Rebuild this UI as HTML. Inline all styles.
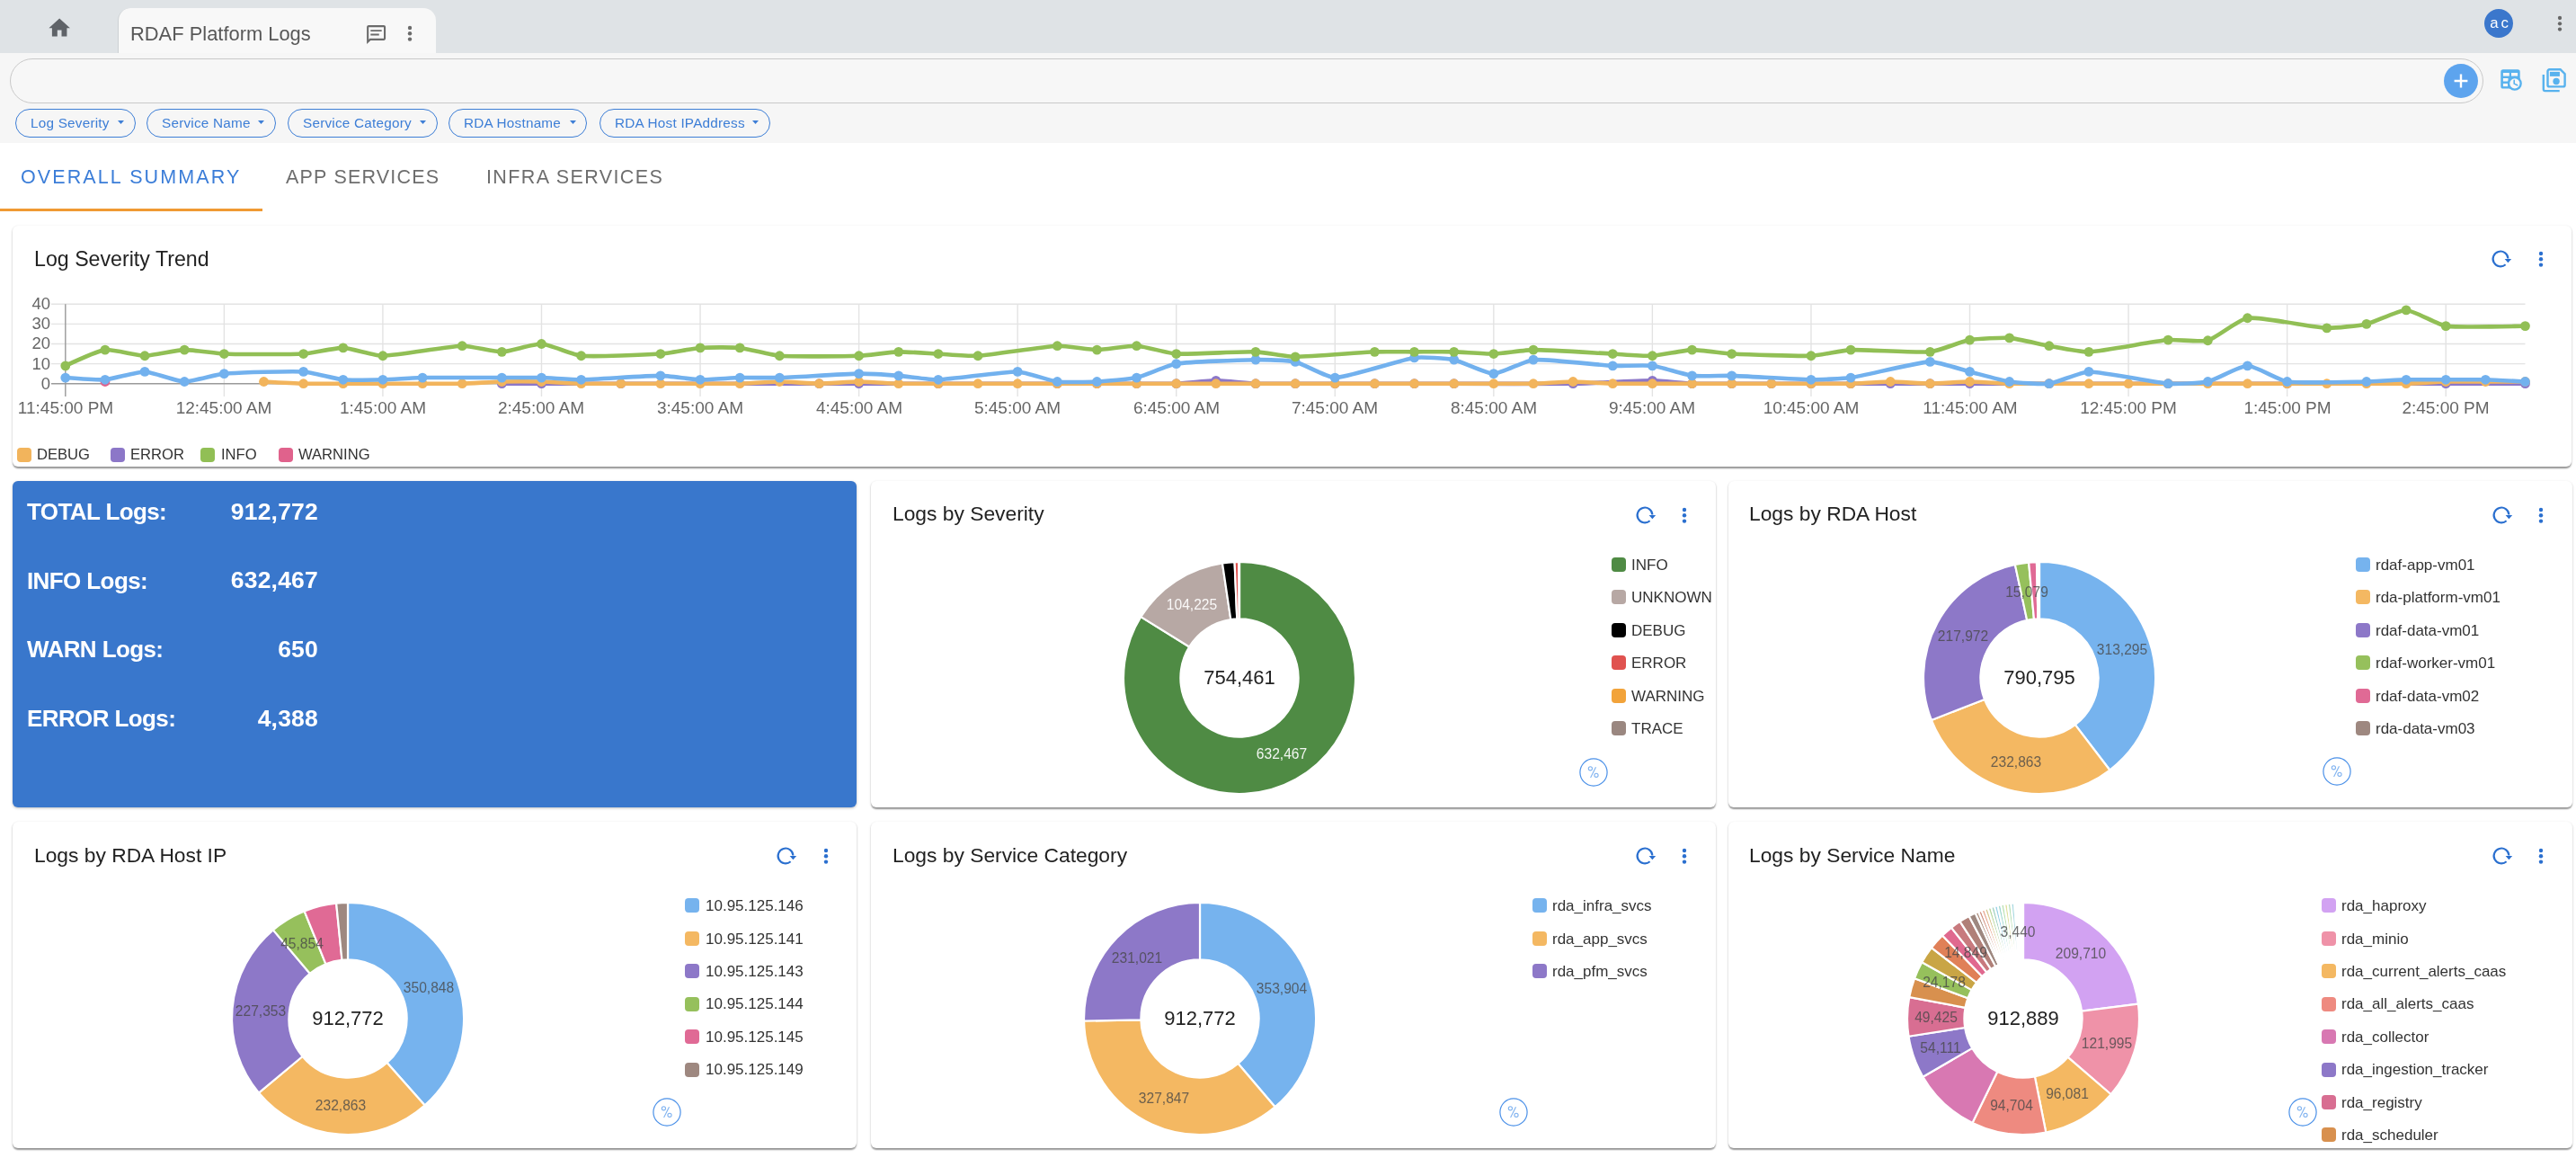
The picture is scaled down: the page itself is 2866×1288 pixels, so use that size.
<!DOCTYPE html><html><head><meta charset="utf-8"><style>
html,body{margin:0;padding:0;width:2866px;height:1288px;overflow:hidden;background:#fff;position:relative;font-family:"Liberation Sans", sans-serif;}
.t{position:absolute;white-space:nowrap;line-height:1;will-change:transform;}
.card{position:absolute;background:#fff;border-radius:6px;box-shadow:0 1px 3px rgba(0,0,0,0.14),0 1.5px 1.5px rgba(0,0,0,0.22),0 2.5px 2px -1px rgba(0,0,0,0.18);}
</style></head><body>

<div style="position:absolute;left:0.00px;top:0.00px;width:2866.00px;height:59.00px;background:#DFE3E6"></div>
<div style="position:absolute;left:131.20px;top:9.00px;width:354.00px;height:50.00px;box-sizing:border-box;background:#F8F8F8;border-left:1.2px solid #CDD1D4;border-radius:14px 14px 0 0"></div>
<svg style="position:absolute;left:51.64px;top:16.66px;" width="28.32" height="28.32" viewBox="0 0 24 24"><path fill="#5F6368" d="M10 20v-6h4v6h5v-8h3L12 3 2 12h3v8z"/></svg>
<div class="t" style="left:144.70px;top:27.26px;font-size:21.9px;color:#585858;font-weight:400;letter-spacing:0px;">RDAF Platform Logs</div>
<svg style="position:absolute;left:405.90px;top:25.90px;" width="25.20" height="25.20" viewBox="0 0 24 24"><path fill="#6B6B6B" d="M20 2H4c-1.1 0-1.99.9-1.99 2L2 22l4-4h14c1.1 0 2-.9 2-2V4c0-1.1-.9-2-2-2zm0 14H5.17L4 17.17V4h16v12zM6 6.9h11.8v1.75H6zM6 11h9v1.75H6z"/></svg>
<svg style="position:absolute;left:450.30px;top:25.20px;" width="12.00" height="24.60" viewBox="0 0 12 24.6"><circle cx="6" cy="6.0" r="2.2" fill="#6B6B6B"/><circle cx="6" cy="12.3" r="2.2" fill="#6B6B6B"/><circle cx="6" cy="18.6" r="2.2" fill="#6B6B6B"/></svg>
<svg style="position:absolute;left:2764.00px;top:10.00px;" width="32.00" height="32.00" viewBox="0 0 32 32"><circle cx="16" cy="16" r="16" fill="#3B77CC"/></svg>
<div class="t" style="left:2032.00px;width:1500px;text-align:center;top:17.98px;font-size:16.8px;color:#fff;font-weight:400;letter-spacing:3.0px;">ac</div>
<svg style="position:absolute;left:2841.80px;top:14.20px;" width="12.00" height="24.60" viewBox="0 0 12 24.6"><circle cx="6" cy="6.0" r="2.15" fill="#666"/><circle cx="6" cy="12.3" r="2.15" fill="#666"/><circle cx="6" cy="18.6" r="2.15" fill="#666"/></svg>
<div style="position:absolute;left:0.00px;top:59.00px;width:2866.00px;height:100.00px;background:#F6F6F6"></div>
<div style="position:absolute;left:11.00px;top:65.00px;width:2752.00px;height:49.60px;box-sizing:border-box;border:1px solid #C9C9C9;border-radius:25px;background:#F7F7F7"></div>
<svg style="position:absolute;left:2719.00px;top:71.00px;" width="38.00" height="38.00" viewBox="0 0 38 38"><circle cx="19" cy="19" r="19" fill="#5DA4EE"/><path d="M11.6 19h14.8M19 11.6v14.8" stroke="#fff" stroke-width="2.4"/></svg>
<svg style="position:absolute;left:2780.00px;top:75.00px;" width="28.00" height="28.00" viewBox="0 0 28 28"><rect x="2.3" y="2.3" width="21.4" height="21.2" rx="2.6" fill="#58B2EE"/>
<g fill="#F7F7F7"><rect x="4.9" y="6.0" width="6.9" height="3.6"/><rect x="14.0" y="6.0" width="7.1" height="3.6"/>
<rect x="4.9" y="12.0" width="5.6" height="3.5"/><rect x="4.9" y="17.9" width="5.2" height="3.2"/></g>
<circle cx="17.85" cy="17.85" r="8" fill="#58B2EE"/><circle cx="17.85" cy="17.85" r="5.6" fill="#F7F7F7"/>
<path d="M17.2 14.4v3.7l3.5 1.7" fill="none" stroke="#58B2EE" stroke-width="1.6" stroke-linecap="round"/></svg>
<svg style="position:absolute;left:2826.00px;top:74.00px;" width="32.00" height="30.00" viewBox="0 0 32 30"><g fill="none" stroke="#58B2EE" stroke-width="2.4">
<path d="M3.8 9.1V25.3a1.8 1.8 0 0 0 1.8 1.8H21.7"/>
<path d="M10.5 3.2H22.6L27.6 8.2V20.4a2 2 0 0 1-2 2H10.5a2 2 0 0 1-2-2V5.2a2 2 0 0 1 2-2z"/></g>
<rect x="10.9" y="5.9" width="11" height="5" fill="#58B2EE"/><circle cx="18.05" cy="16.5" r="3.7" fill="#58B2EE"/></svg>
<div style="position:absolute;left:17.10px;top:120.80px;width:133.50px;height:32.00px;box-sizing:border-box;border:1.6px solid #3D7ED6;border-radius:16px"></div>
<div class="t" style="left:34.20px;top:128.95px;font-size:15.3px;color:#3D7ED6;font-weight:400;letter-spacing:0.22px;">Log Severity</div>
<svg style="position:absolute;left:131.10px;top:133.80px;" width="7.00" height="4.00" viewBox="0 0 7 4"><path d="M0 0h7L3.5 4z" fill="#3D7ED6"/></svg>
<div style="position:absolute;left:163.30px;top:120.80px;width:143.30px;height:32.00px;box-sizing:border-box;border:1.6px solid #3D7ED6;border-radius:16px"></div>
<div class="t" style="left:180.40px;top:128.95px;font-size:15.3px;color:#3D7ED6;font-weight:400;letter-spacing:0.22px;">Service Name</div>
<svg style="position:absolute;left:287.10px;top:133.80px;" width="7.00" height="4.00" viewBox="0 0 7 4"><path d="M0 0h7L3.5 4z" fill="#3D7ED6"/></svg>
<div style="position:absolute;left:320.20px;top:120.80px;width:166.50px;height:32.00px;box-sizing:border-box;border:1.6px solid #3D7ED6;border-radius:16px"></div>
<div class="t" style="left:337.30px;top:128.95px;font-size:15.3px;color:#3D7ED6;font-weight:400;letter-spacing:0.22px;">Service Category</div>
<svg style="position:absolute;left:467.20px;top:133.80px;" width="7.00" height="4.00" viewBox="0 0 7 4"><path d="M0 0h7L3.5 4z" fill="#3D7ED6"/></svg>
<div style="position:absolute;left:499.30px;top:120.80px;width:154.10px;height:32.00px;box-sizing:border-box;border:1.6px solid #3D7ED6;border-radius:16px"></div>
<div class="t" style="left:516.40px;top:128.95px;font-size:15.3px;color:#3D7ED6;font-weight:400;letter-spacing:0.22px;">RDA Hostname</div>
<svg style="position:absolute;left:633.90px;top:133.80px;" width="7.00" height="4.00" viewBox="0 0 7 4"><path d="M0 0h7L3.5 4z" fill="#3D7ED6"/></svg>
<div style="position:absolute;left:667.00px;top:120.80px;width:189.70px;height:32.00px;box-sizing:border-box;border:1.6px solid #3D7ED6;border-radius:16px"></div>
<div class="t" style="left:684.10px;top:128.95px;font-size:15.3px;color:#3D7ED6;font-weight:400;letter-spacing:0.22px;">RDA Host IPAddress</div>
<svg style="position:absolute;left:837.20px;top:133.80px;" width="7.00" height="4.00" viewBox="0 0 7 4"><path d="M0 0h7L3.5 4z" fill="#3D7ED6"/></svg>
<div class="t" style="left:23.40px;top:186.90px;font-size:21.5px;color:#3B7DD8;font-weight:400;letter-spacing:2.1px;">OVERALL SUMMARY</div>
<div class="t" style="left:318.00px;top:186.90px;font-size:21.5px;color:#6E6E6E;font-weight:400;letter-spacing:1.2px;">APP SERVICES</div>
<div class="t" style="left:540.90px;top:186.90px;font-size:21.5px;color:#6E6E6E;font-weight:400;letter-spacing:1.4px;">INFRA SERVICES</div>
<div style="position:absolute;left:0.00px;top:232.00px;width:292.00px;height:3.00px;background:#F09A33"></div>
<div class="card" style="left:13.5px;top:250.5px;width:2847.5px;height:268.5px"></div>
<div class="t" style="left:38.00px;top:276.76px;font-size:23.2px;color:#222;font-weight:400;letter-spacing:0px;">Log Severity Trend</div>
<svg style="position:absolute;left:2768.20px;top:274.40px;" width="28.00" height="28.00" viewBox="0 0 28 28"><path d="M19.62 20.24 A8.4 8.4 0 1 1 22.40 13.50" fill="none" stroke="#2A6FCF" stroke-width="2.1"/><path d="M18.60 13.90h7.6l-3.8 4.3z" fill="#2A6FCF"/></svg>
<svg style="position:absolute;left:2821.40px;top:276.20px;" width="12.00" height="24.60" viewBox="0 0 12 24.6"><circle cx="6" cy="6.0" r="2.2" fill="#2A6FCF"/><circle cx="6" cy="12.3" r="2.2" fill="#2A6FCF"/><circle cx="6" cy="18.6" r="2.2" fill="#2A6FCF"/></svg>
<svg style="position:absolute;left:0.00px;top:0.00px;pointer-events:none" width="2866.00" height="520.00" viewBox="0 0 2866 520"><line x1="57" y1="404.60" x2="2809.48" y2="404.60" stroke="#E3E3E3" stroke-width="1.4"/><line x1="57" y1="382.50" x2="2809.48" y2="382.50" stroke="#E3E3E3" stroke-width="1.4"/><line x1="57" y1="360.40" x2="2809.48" y2="360.40" stroke="#E3E3E3" stroke-width="1.4"/><line x1="57" y1="338.30" x2="2809.48" y2="338.30" stroke="#E3E3E3" stroke-width="1.4"/><line x1="72.80" y1="338.30" x2="72.80" y2="441" stroke="#9A9A9A" stroke-width="1.4"/><line x1="249.36" y1="338.30" x2="249.36" y2="441" stroke="#E3E3E3" stroke-width="1.4"/><line x1="425.92" y1="338.30" x2="425.92" y2="441" stroke="#E3E3E3" stroke-width="1.4"/><line x1="602.48" y1="338.30" x2="602.48" y2="441" stroke="#E3E3E3" stroke-width="1.4"/><line x1="779.04" y1="338.30" x2="779.04" y2="441" stroke="#E3E3E3" stroke-width="1.4"/><line x1="955.60" y1="338.30" x2="955.60" y2="441" stroke="#E3E3E3" stroke-width="1.4"/><line x1="1132.16" y1="338.30" x2="1132.16" y2="441" stroke="#E3E3E3" stroke-width="1.4"/><line x1="1308.72" y1="338.30" x2="1308.72" y2="441" stroke="#E3E3E3" stroke-width="1.4"/><line x1="1485.28" y1="338.30" x2="1485.28" y2="441" stroke="#E3E3E3" stroke-width="1.4"/><line x1="1661.84" y1="338.30" x2="1661.84" y2="441" stroke="#E3E3E3" stroke-width="1.4"/><line x1="1838.40" y1="338.30" x2="1838.40" y2="441" stroke="#E3E3E3" stroke-width="1.4"/><line x1="2014.96" y1="338.30" x2="2014.96" y2="441" stroke="#E3E3E3" stroke-width="1.4"/><line x1="2191.52" y1="338.30" x2="2191.52" y2="441" stroke="#E3E3E3" stroke-width="1.4"/><line x1="2368.08" y1="338.30" x2="2368.08" y2="441" stroke="#E3E3E3" stroke-width="1.4"/><line x1="2544.64" y1="338.30" x2="2544.64" y2="441" stroke="#E3E3E3" stroke-width="1.4"/><line x1="2721.20" y1="338.30" x2="2721.20" y2="441" stroke="#E3E3E3" stroke-width="1.4"/><line x1="57" y1="426.70" x2="2809.48" y2="426.70" stroke="#9A9A9A" stroke-width="1.4"/><path d="M558.34 426.70 C558.34 426.70 594.53 426.70 602.48 426.70 C618.37 426.70 674.87 426.70 690.76 426.70 C730.49 426.70 871.73 426.70 911.46 426.70 C919.41 426.70 947.65 426.70 955.60 426.70 C971.49 426.70 1027.99 426.70 1043.88 426.70 C1067.72 426.70 1152.46 426.70 1176.30 426.70 C1184.25 426.70 1212.49 426.70 1220.44 426.70 C1228.39 426.70 1256.63 426.70 1264.58 426.70 C1272.53 426.70 1300.79 427.00 1308.72 426.70 C1316.68 426.40 1344.91 423.38 1352.86 423.38 C1360.81 423.38 1389.04 426.40 1397.00 426.70 C1404.93 427.00 1433.19 426.70 1441.14 426.70 C1449.09 426.70 1477.33 426.70 1485.28 426.70 C1493.23 426.70 1521.47 426.70 1529.42 426.70 C1537.37 426.70 1565.61 426.70 1573.56 426.70 C1581.51 426.70 1609.75 426.70 1617.70 426.70 C1641.54 426.70 1726.29 427.06 1750.12 426.70 C1766.02 426.46 1822.52 423.38 1838.40 423.38 C1846.36 423.38 1874.58 426.40 1882.54 426.70 C1890.47 427.00 1918.73 426.70 1926.68 426.70 C1934.63 426.70 1962.87 426.70 1970.82 426.70 C1978.77 426.70 2007.01 426.70 2014.96 426.70 C2022.91 426.70 2051.15 426.70 2059.10 426.70 C2067.05 426.70 2095.29 426.70 2103.24 426.70 C2111.19 426.70 2139.43 426.70 2147.38 426.70 C2155.33 426.70 2183.57 426.70 2191.52 426.70 C2207.41 426.70 2263.91 426.70 2279.80 426.70 C2303.64 426.70 2388.38 426.70 2412.22 426.70 C2436.06 426.70 2520.80 426.70 2544.64 426.70 C2576.42 426.70 2689.42 426.70 2721.20 426.70 C2737.09 426.70 2809.48 426.70 2809.48 426.70" fill="none" stroke="#8C77C8" stroke-width="4.6" stroke-linejoin="round"/><circle cx="558.34" cy="426.70" r="5.4" fill="#8C77C8"/><circle cx="602.48" cy="426.70" r="5.4" fill="#8C77C8"/><circle cx="690.76" cy="426.70" r="5.4" fill="#8C77C8"/><circle cx="911.46" cy="426.70" r="5.4" fill="#8C77C8"/><circle cx="955.60" cy="426.70" r="5.4" fill="#8C77C8"/><circle cx="1043.88" cy="426.70" r="5.4" fill="#8C77C8"/><circle cx="1176.30" cy="426.70" r="5.4" fill="#8C77C8"/><circle cx="1220.44" cy="426.70" r="5.4" fill="#8C77C8"/><circle cx="1264.58" cy="426.70" r="5.4" fill="#8C77C8"/><circle cx="1308.72" cy="426.70" r="5.4" fill="#8C77C8"/><circle cx="1352.86" cy="423.38" r="5.4" fill="#8C77C8"/><circle cx="1397.00" cy="426.70" r="5.4" fill="#8C77C8"/><circle cx="1441.14" cy="426.70" r="5.4" fill="#8C77C8"/><circle cx="1485.28" cy="426.70" r="5.4" fill="#8C77C8"/><circle cx="1529.42" cy="426.70" r="5.4" fill="#8C77C8"/><circle cx="1573.56" cy="426.70" r="5.4" fill="#8C77C8"/><circle cx="1617.70" cy="426.70" r="5.4" fill="#8C77C8"/><circle cx="1750.12" cy="426.70" r="5.4" fill="#8C77C8"/><circle cx="1838.40" cy="423.38" r="5.4" fill="#8C77C8"/><circle cx="1882.54" cy="426.70" r="5.4" fill="#8C77C8"/><circle cx="1926.68" cy="426.70" r="5.4" fill="#8C77C8"/><circle cx="1970.82" cy="426.70" r="5.4" fill="#8C77C8"/><circle cx="2014.96" cy="426.70" r="5.4" fill="#8C77C8"/><circle cx="2059.10" cy="426.70" r="5.4" fill="#8C77C8"/><circle cx="2103.24" cy="426.70" r="5.4" fill="#8C77C8"/><circle cx="2147.38" cy="426.70" r="5.4" fill="#8C77C8"/><circle cx="2191.52" cy="426.70" r="5.4" fill="#8C77C8"/><circle cx="2279.80" cy="426.70" r="5.4" fill="#8C77C8"/><circle cx="2412.22" cy="426.70" r="5.4" fill="#8C77C8"/><circle cx="2544.64" cy="426.70" r="5.4" fill="#8C77C8"/><circle cx="2721.20" cy="426.70" r="5.4" fill="#8C77C8"/><circle cx="2809.48" cy="426.70" r="5.4" fill="#8C77C8"/><circle cx="116.94" cy="424.49" r="5.4" fill="#E0628C"/><path d="M293.50 424.49 C293.50 424.49 329.69 426.50 337.64 426.70 C345.58 426.90 373.83 426.70 381.78 426.70 C389.73 426.70 417.97 426.70 425.92 426.70 C433.87 426.70 462.11 426.70 470.06 426.70 C478.01 426.70 506.26 426.90 514.20 426.70 C522.15 426.50 550.39 424.69 558.34 424.49 C566.28 424.29 594.54 424.29 602.48 424.49 C610.43 424.69 638.67 426.50 646.62 426.70 C654.56 426.90 682.81 426.70 690.76 426.70 C698.71 426.70 726.95 426.70 734.90 426.70 C742.85 426.70 771.09 426.70 779.04 426.70 C786.99 426.70 815.24 426.90 823.18 426.70 C831.13 426.50 859.37 424.49 867.32 424.49 C875.27 424.49 903.51 426.70 911.46 426.70 C919.41 426.70 947.65 424.49 955.60 424.49 C963.55 424.49 991.79 426.50 999.74 426.70 C1007.68 426.90 1035.93 426.70 1043.88 426.70 C1051.83 426.70 1080.07 426.70 1088.02 426.70 C1095.97 426.70 1124.21 426.70 1132.16 426.70 C1140.11 426.70 1168.35 426.70 1176.30 426.70 C1184.25 426.70 1212.49 426.70 1220.44 426.70 C1228.39 426.70 1256.63 426.70 1264.58 426.70 C1272.53 426.70 1300.77 426.70 1308.72 426.70 C1316.67 426.70 1344.91 426.70 1352.86 426.70 C1360.81 426.70 1389.05 426.70 1397.00 426.70 C1404.95 426.70 1433.19 426.70 1441.14 426.70 C1449.09 426.70 1477.33 426.70 1485.28 426.70 C1493.23 426.70 1521.47 426.70 1529.42 426.70 C1537.37 426.70 1565.61 426.70 1573.56 426.70 C1581.51 426.70 1609.75 426.70 1617.70 426.70 C1625.65 426.70 1653.89 426.70 1661.84 426.70 C1669.79 426.70 1698.04 426.90 1705.98 426.70 C1713.93 426.50 1742.17 424.49 1750.12 424.49 C1758.07 424.49 1786.31 426.50 1794.26 426.70 C1802.20 426.90 1830.45 426.70 1838.40 426.70 C1846.35 426.70 1874.59 426.70 1882.54 426.70 C1890.49 426.70 1918.73 426.70 1926.68 426.70 C1934.63 426.70 1962.87 426.70 1970.82 426.70 C1978.77 426.70 2007.01 426.70 2014.96 426.70 C2022.91 426.70 2051.16 426.90 2059.10 426.70 C2067.05 426.50 2095.29 424.49 2103.24 424.49 C2111.19 424.49 2139.43 426.70 2147.38 426.70 C2155.33 426.70 2183.57 424.49 2191.52 424.49 C2199.47 424.49 2227.71 426.50 2235.66 426.70 C2243.60 426.90 2271.85 426.70 2279.80 426.70 C2287.75 426.70 2315.99 426.70 2323.94 426.70 C2331.89 426.70 2360.13 426.70 2368.08 426.70 C2376.03 426.70 2404.27 426.70 2412.22 426.70 C2420.17 426.70 2448.41 426.70 2456.36 426.70 C2464.31 426.70 2492.55 426.70 2500.50 426.70 C2508.45 426.70 2536.69 426.70 2544.64 426.70 C2552.59 426.70 2580.83 426.70 2588.78 426.70 C2596.73 426.70 2624.97 426.70 2632.92 426.70 C2640.87 426.70 2669.12 426.90 2677.06 426.70 C2685.01 426.50 2713.25 424.69 2721.20 424.49 C2729.14 424.29 2757.39 424.49 2765.34 424.49 C2773.29 424.49 2809.48 424.49 2809.48 424.49" fill="none" stroke="#F2B45C" stroke-width="4.6" stroke-linejoin="round"/><circle cx="293.50" cy="424.49" r="5.4" fill="#F2B45C"/><circle cx="337.64" cy="426.70" r="5.4" fill="#F2B45C"/><circle cx="381.78" cy="426.70" r="5.4" fill="#F2B45C"/><circle cx="425.92" cy="426.70" r="5.4" fill="#F2B45C"/><circle cx="470.06" cy="426.70" r="5.4" fill="#F2B45C"/><circle cx="514.20" cy="426.70" r="5.4" fill="#F2B45C"/><circle cx="558.34" cy="424.49" r="5.4" fill="#F2B45C"/><circle cx="602.48" cy="424.49" r="5.4" fill="#F2B45C"/><circle cx="646.62" cy="426.70" r="5.4" fill="#F2B45C"/><circle cx="690.76" cy="426.70" r="5.4" fill="#F2B45C"/><circle cx="734.90" cy="426.70" r="5.4" fill="#F2B45C"/><circle cx="779.04" cy="426.70" r="5.4" fill="#F2B45C"/><circle cx="823.18" cy="426.70" r="5.4" fill="#F2B45C"/><circle cx="867.32" cy="424.49" r="5.4" fill="#F2B45C"/><circle cx="911.46" cy="426.70" r="5.4" fill="#F2B45C"/><circle cx="955.60" cy="424.49" r="5.4" fill="#F2B45C"/><circle cx="999.74" cy="426.70" r="5.4" fill="#F2B45C"/><circle cx="1043.88" cy="426.70" r="5.4" fill="#F2B45C"/><circle cx="1088.02" cy="426.70" r="5.4" fill="#F2B45C"/><circle cx="1132.16" cy="426.70" r="5.4" fill="#F2B45C"/><circle cx="1176.30" cy="426.70" r="5.4" fill="#F2B45C"/><circle cx="1220.44" cy="426.70" r="5.4" fill="#F2B45C"/><circle cx="1264.58" cy="426.70" r="5.4" fill="#F2B45C"/><circle cx="1308.72" cy="426.70" r="5.4" fill="#F2B45C"/><circle cx="1352.86" cy="426.70" r="5.4" fill="#F2B45C"/><circle cx="1397.00" cy="426.70" r="5.4" fill="#F2B45C"/><circle cx="1441.14" cy="426.70" r="5.4" fill="#F2B45C"/><circle cx="1485.28" cy="426.70" r="5.4" fill="#F2B45C"/><circle cx="1529.42" cy="426.70" r="5.4" fill="#F2B45C"/><circle cx="1573.56" cy="426.70" r="5.4" fill="#F2B45C"/><circle cx="1617.70" cy="426.70" r="5.4" fill="#F2B45C"/><circle cx="1661.84" cy="426.70" r="5.4" fill="#F2B45C"/><circle cx="1705.98" cy="426.70" r="5.4" fill="#F2B45C"/><circle cx="1750.12" cy="424.49" r="5.4" fill="#F2B45C"/><circle cx="1794.26" cy="426.70" r="5.4" fill="#F2B45C"/><circle cx="1838.40" cy="426.70" r="5.4" fill="#F2B45C"/><circle cx="1882.54" cy="426.70" r="5.4" fill="#F2B45C"/><circle cx="1926.68" cy="426.70" r="5.4" fill="#F2B45C"/><circle cx="1970.82" cy="426.70" r="5.4" fill="#F2B45C"/><circle cx="2014.96" cy="426.70" r="5.4" fill="#F2B45C"/><circle cx="2059.10" cy="426.70" r="5.4" fill="#F2B45C"/><circle cx="2103.24" cy="424.49" r="5.4" fill="#F2B45C"/><circle cx="2147.38" cy="426.70" r="5.4" fill="#F2B45C"/><circle cx="2191.52" cy="424.49" r="5.4" fill="#F2B45C"/><circle cx="2235.66" cy="426.70" r="5.4" fill="#F2B45C"/><circle cx="2279.80" cy="426.70" r="5.4" fill="#F2B45C"/><circle cx="2323.94" cy="426.70" r="5.4" fill="#F2B45C"/><circle cx="2368.08" cy="426.70" r="5.4" fill="#F2B45C"/><circle cx="2412.22" cy="426.70" r="5.4" fill="#F2B45C"/><circle cx="2456.36" cy="426.70" r="5.4" fill="#F2B45C"/><circle cx="2500.50" cy="426.70" r="5.4" fill="#F2B45C"/><circle cx="2544.64" cy="426.70" r="5.4" fill="#F2B45C"/><circle cx="2588.78" cy="426.70" r="5.4" fill="#F2B45C"/><circle cx="2632.92" cy="426.70" r="5.4" fill="#F2B45C"/><circle cx="2677.06" cy="426.70" r="5.4" fill="#F2B45C"/><circle cx="2721.20" cy="424.49" r="5.4" fill="#F2B45C"/><circle cx="2765.34" cy="424.49" r="5.4" fill="#F2B45C"/><circle cx="2809.48" cy="424.49" r="5.4" fill="#F2B45C"/><path d="M72.80 420.07 C72.80 420.07 109.07 422.87 116.94 422.28 C124.96 421.68 153.18 413.24 161.08 413.44 C169.07 413.64 197.23 424.29 205.22 424.49 C213.12 424.69 241.31 416.32 249.36 415.65 C265.15 414.33 321.85 412.65 337.64 413.44 C345.69 413.84 373.76 421.48 381.78 422.28 C389.65 423.07 417.98 422.48 425.92 422.28 C433.87 422.08 462.11 420.20 470.06 420.07 C485.94 419.80 542.45 420.07 558.34 420.07 C566.29 420.07 594.54 419.87 602.48 420.07 C610.43 420.27 638.67 422.41 646.62 422.28 C662.51 422.01 719.03 417.86 734.90 417.86 C742.87 417.86 771.08 422.08 779.04 422.28 C786.97 422.48 815.23 420.27 823.18 420.07 C831.12 419.87 859.38 420.33 867.32 420.07 C883.22 419.54 939.71 415.92 955.60 415.65 C963.55 415.52 991.81 417.26 999.74 417.86 C1007.70 418.46 1035.93 422.55 1043.88 422.28 C1059.77 421.75 1116.40 413.18 1132.16 413.44 C1140.24 413.57 1168.23 423.48 1176.30 424.49 C1184.12 425.47 1212.51 424.89 1220.44 424.49 C1228.41 424.09 1256.85 421.81 1264.58 420.07 C1272.74 418.23 1300.47 405.84 1308.72 404.60 C1324.31 402.26 1381.11 400.45 1397.00 400.18 C1404.95 400.05 1433.49 400.67 1441.14 402.39 C1449.38 404.25 1477.10 420.34 1485.28 420.07 C1500.94 419.55 1557.52 400.38 1573.56 397.97 C1581.35 396.80 1609.98 398.63 1617.70 400.18 C1625.87 401.82 1653.89 415.65 1661.84 415.65 C1669.79 415.65 1697.74 400.73 1705.98 400.18 C1721.58 399.14 1778.35 406.01 1794.26 406.81 C1802.19 407.21 1830.58 405.83 1838.40 406.81 C1846.47 407.82 1874.47 416.85 1882.54 417.86 C1890.36 418.84 1918.74 417.60 1926.68 417.86 C1942.58 418.39 1999.07 422.01 2014.96 422.28 C2022.91 422.41 2051.25 421.25 2059.10 420.07 C2075.09 417.67 2131.55 403.18 2147.38 402.39 C2155.38 401.99 2183.57 411.45 2191.52 413.44 C2199.47 415.43 2227.60 423.28 2235.66 424.49 C2243.49 425.67 2272.02 427.67 2279.80 426.70 C2287.91 425.68 2315.82 413.44 2323.94 413.44 C2339.66 413.44 2396.28 425.37 2412.22 426.70 C2420.11 427.36 2448.71 426.21 2456.36 424.49 C2464.60 422.63 2492.55 406.81 2500.50 406.81 C2508.45 406.81 2536.30 423.38 2544.64 424.49 C2560.13 426.56 2617.04 424.76 2632.92 424.49 C2640.87 424.36 2669.11 422.48 2677.06 422.28 C2685.00 422.08 2713.25 422.28 2721.20 422.28 C2729.15 422.28 2757.40 422.08 2765.34 422.28 C2773.29 422.48 2809.48 424.49 2809.48 424.49" fill="none" stroke="#72B1EE" stroke-width="4.6" stroke-linejoin="round"/><circle cx="72.80" cy="420.07" r="5.4" fill="#72B1EE"/><circle cx="116.94" cy="422.28" r="5.4" fill="#72B1EE"/><circle cx="161.08" cy="413.44" r="5.4" fill="#72B1EE"/><circle cx="205.22" cy="424.49" r="5.4" fill="#72B1EE"/><circle cx="249.36" cy="415.65" r="5.4" fill="#72B1EE"/><circle cx="337.64" cy="413.44" r="5.4" fill="#72B1EE"/><circle cx="381.78" cy="422.28" r="5.4" fill="#72B1EE"/><circle cx="425.92" cy="422.28" r="5.4" fill="#72B1EE"/><circle cx="470.06" cy="420.07" r="5.4" fill="#72B1EE"/><circle cx="558.34" cy="420.07" r="5.4" fill="#72B1EE"/><circle cx="602.48" cy="420.07" r="5.4" fill="#72B1EE"/><circle cx="646.62" cy="422.28" r="5.4" fill="#72B1EE"/><circle cx="734.90" cy="417.86" r="5.4" fill="#72B1EE"/><circle cx="779.04" cy="422.28" r="5.4" fill="#72B1EE"/><circle cx="823.18" cy="420.07" r="5.4" fill="#72B1EE"/><circle cx="867.32" cy="420.07" r="5.4" fill="#72B1EE"/><circle cx="955.60" cy="415.65" r="5.4" fill="#72B1EE"/><circle cx="999.74" cy="417.86" r="5.4" fill="#72B1EE"/><circle cx="1043.88" cy="422.28" r="5.4" fill="#72B1EE"/><circle cx="1132.16" cy="413.44" r="5.4" fill="#72B1EE"/><circle cx="1176.30" cy="424.49" r="5.4" fill="#72B1EE"/><circle cx="1220.44" cy="424.49" r="5.4" fill="#72B1EE"/><circle cx="1264.58" cy="420.07" r="5.4" fill="#72B1EE"/><circle cx="1308.72" cy="404.60" r="5.4" fill="#72B1EE"/><circle cx="1397.00" cy="400.18" r="5.4" fill="#72B1EE"/><circle cx="1441.14" cy="402.39" r="5.4" fill="#72B1EE"/><circle cx="1485.28" cy="420.07" r="5.4" fill="#72B1EE"/><circle cx="1573.56" cy="397.97" r="5.4" fill="#72B1EE"/><circle cx="1617.70" cy="400.18" r="5.4" fill="#72B1EE"/><circle cx="1661.84" cy="415.65" r="5.4" fill="#72B1EE"/><circle cx="1705.98" cy="400.18" r="5.4" fill="#72B1EE"/><circle cx="1794.26" cy="406.81" r="5.4" fill="#72B1EE"/><circle cx="1838.40" cy="406.81" r="5.4" fill="#72B1EE"/><circle cx="1882.54" cy="417.86" r="5.4" fill="#72B1EE"/><circle cx="1926.68" cy="417.86" r="5.4" fill="#72B1EE"/><circle cx="2014.96" cy="422.28" r="5.4" fill="#72B1EE"/><circle cx="2059.10" cy="420.07" r="5.4" fill="#72B1EE"/><circle cx="2147.38" cy="402.39" r="5.4" fill="#72B1EE"/><circle cx="2191.52" cy="413.44" r="5.4" fill="#72B1EE"/><circle cx="2235.66" cy="424.49" r="5.4" fill="#72B1EE"/><circle cx="2279.80" cy="426.70" r="5.4" fill="#72B1EE"/><circle cx="2323.94" cy="413.44" r="5.4" fill="#72B1EE"/><circle cx="2412.22" cy="426.70" r="5.4" fill="#72B1EE"/><circle cx="2456.36" cy="424.49" r="5.4" fill="#72B1EE"/><circle cx="2500.50" cy="406.81" r="5.4" fill="#72B1EE"/><circle cx="2544.64" cy="424.49" r="5.4" fill="#72B1EE"/><circle cx="2632.92" cy="424.49" r="5.4" fill="#72B1EE"/><circle cx="2677.06" cy="422.28" r="5.4" fill="#72B1EE"/><circle cx="2721.20" cy="422.28" r="5.4" fill="#72B1EE"/><circle cx="2765.34" cy="422.28" r="5.4" fill="#72B1EE"/><circle cx="2809.48" cy="424.49" r="5.4" fill="#72B1EE"/><path d="M72.80 406.81 C72.80 406.81 108.74 390.16 116.94 389.13 C124.63 388.17 153.13 395.76 161.08 395.76 C169.03 395.76 197.25 389.33 205.22 389.13 C213.14 388.93 241.39 393.28 249.36 393.55 C265.22 394.08 321.81 394.34 337.64 393.55 C345.64 393.15 373.87 386.72 381.78 386.92 C389.76 387.12 417.91 395.89 425.92 395.76 C441.75 395.50 498.33 385.24 514.20 384.71 C522.16 384.44 550.43 391.54 558.34 391.34 C566.32 391.14 594.63 382.11 602.48 382.50 C610.52 382.90 638.45 395.08 646.62 395.76 C662.28 397.07 719.07 394.61 734.90 393.55 C742.90 393.02 771.05 387.52 779.04 386.92 C786.94 386.33 815.31 386.13 823.18 386.92 C831.20 387.72 859.27 395.22 867.32 395.76 C883.11 396.81 939.74 396.29 955.60 395.76 C963.57 395.49 991.78 391.54 999.74 391.34 C1007.67 391.14 1035.93 393.15 1043.88 393.55 C1051.83 393.95 1080.11 396.29 1088.02 395.76 C1103.94 394.70 1160.39 385.51 1176.30 384.71 C1184.23 384.31 1212.49 389.13 1220.44 389.13 C1228.39 389.13 1256.69 384.32 1264.58 384.71 C1272.58 385.11 1300.67 393.15 1308.72 393.55 C1324.51 394.34 1381.15 390.94 1397.00 391.34 C1404.98 391.54 1433.16 396.87 1441.14 396.87 C1457.00 396.87 1513.52 392.00 1529.42 391.34 C1537.35 391.01 1565.61 391.34 1573.56 391.34 C1581.51 391.34 1609.76 391.14 1617.70 391.34 C1625.65 391.54 1653.91 393.75 1661.84 393.55 C1669.80 393.35 1698.01 389.13 1705.98 389.13 C1721.85 389.13 1778.37 392.75 1794.26 393.55 C1802.21 393.95 1830.49 396.16 1838.40 395.76 C1846.38 395.36 1874.57 389.33 1882.54 389.13 C1890.46 388.93 1918.71 393.15 1926.68 393.55 C1942.55 394.34 1999.13 396.29 2014.96 395.76 C2022.96 395.49 2051.10 389.40 2059.10 389.13 C2074.93 388.60 2131.72 392.65 2147.38 391.34 C2155.55 390.66 2183.41 379.50 2191.52 378.08 C2199.30 376.72 2227.79 375.28 2235.66 375.87 C2243.68 376.47 2271.82 383.31 2279.80 384.71 C2287.71 386.10 2315.99 391.74 2323.94 391.34 C2339.83 390.54 2396.27 379.60 2412.22 378.08 C2420.11 377.33 2448.97 380.78 2456.36 378.74 C2464.86 376.40 2491.85 354.68 2500.50 353.77 C2515.68 352.17 2572.87 364.02 2588.78 364.82 C2596.71 365.22 2625.19 362.14 2632.92 360.40 C2641.08 358.56 2669.18 344.73 2677.06 344.93 C2685.07 345.13 2712.86 361.50 2721.20 362.61 C2736.69 364.68 2809.48 362.61 2809.48 362.61" fill="none" stroke="#91BF55" stroke-width="4.6" stroke-linejoin="round"/><circle cx="72.80" cy="406.81" r="5.4" fill="#91BF55"/><circle cx="116.94" cy="389.13" r="5.4" fill="#91BF55"/><circle cx="161.08" cy="395.76" r="5.4" fill="#91BF55"/><circle cx="205.22" cy="389.13" r="5.4" fill="#91BF55"/><circle cx="249.36" cy="393.55" r="5.4" fill="#91BF55"/><circle cx="337.64" cy="393.55" r="5.4" fill="#91BF55"/><circle cx="381.78" cy="386.92" r="5.4" fill="#91BF55"/><circle cx="425.92" cy="395.76" r="5.4" fill="#91BF55"/><circle cx="514.20" cy="384.71" r="5.4" fill="#91BF55"/><circle cx="558.34" cy="391.34" r="5.4" fill="#91BF55"/><circle cx="602.48" cy="382.50" r="5.4" fill="#91BF55"/><circle cx="646.62" cy="395.76" r="5.4" fill="#91BF55"/><circle cx="734.90" cy="393.55" r="5.4" fill="#91BF55"/><circle cx="779.04" cy="386.92" r="5.4" fill="#91BF55"/><circle cx="823.18" cy="386.92" r="5.4" fill="#91BF55"/><circle cx="867.32" cy="395.76" r="5.4" fill="#91BF55"/><circle cx="955.60" cy="395.76" r="5.4" fill="#91BF55"/><circle cx="999.74" cy="391.34" r="5.4" fill="#91BF55"/><circle cx="1043.88" cy="393.55" r="5.4" fill="#91BF55"/><circle cx="1088.02" cy="395.76" r="5.4" fill="#91BF55"/><circle cx="1176.30" cy="384.71" r="5.4" fill="#91BF55"/><circle cx="1220.44" cy="389.13" r="5.4" fill="#91BF55"/><circle cx="1264.58" cy="384.71" r="5.4" fill="#91BF55"/><circle cx="1308.72" cy="393.55" r="5.4" fill="#91BF55"/><circle cx="1397.00" cy="391.34" r="5.4" fill="#91BF55"/><circle cx="1441.14" cy="396.87" r="5.4" fill="#91BF55"/><circle cx="1529.42" cy="391.34" r="5.4" fill="#91BF55"/><circle cx="1573.56" cy="391.34" r="5.4" fill="#91BF55"/><circle cx="1617.70" cy="391.34" r="5.4" fill="#91BF55"/><circle cx="1661.84" cy="393.55" r="5.4" fill="#91BF55"/><circle cx="1705.98" cy="389.13" r="5.4" fill="#91BF55"/><circle cx="1794.26" cy="393.55" r="5.4" fill="#91BF55"/><circle cx="1838.40" cy="395.76" r="5.4" fill="#91BF55"/><circle cx="1882.54" cy="389.13" r="5.4" fill="#91BF55"/><circle cx="1926.68" cy="393.55" r="5.4" fill="#91BF55"/><circle cx="2014.96" cy="395.76" r="5.4" fill="#91BF55"/><circle cx="2059.10" cy="389.13" r="5.4" fill="#91BF55"/><circle cx="2147.38" cy="391.34" r="5.4" fill="#91BF55"/><circle cx="2191.52" cy="378.08" r="5.4" fill="#91BF55"/><circle cx="2235.66" cy="375.87" r="5.4" fill="#91BF55"/><circle cx="2279.80" cy="384.71" r="5.4" fill="#91BF55"/><circle cx="2323.94" cy="391.34" r="5.4" fill="#91BF55"/><circle cx="2412.22" cy="378.08" r="5.4" fill="#91BF55"/><circle cx="2456.36" cy="378.74" r="5.4" fill="#91BF55"/><circle cx="2500.50" cy="353.77" r="5.4" fill="#91BF55"/><circle cx="2588.78" cy="364.82" r="5.4" fill="#91BF55"/><circle cx="2632.92" cy="360.40" r="5.4" fill="#91BF55"/><circle cx="2677.06" cy="344.93" r="5.4" fill="#91BF55"/><circle cx="2721.20" cy="362.61" r="5.4" fill="#91BF55"/><circle cx="2809.48" cy="362.61" r="5.4" fill="#91BF55"/></svg>
<div class="t" style="left:-1444.30px;width:1500px;text-align:right;top:417.64px;font-size:18.5px;color:#666;font-weight:400;letter-spacing:0px;">0</div>
<div class="t" style="left:-1444.30px;width:1500px;text-align:right;top:395.54px;font-size:18.5px;color:#666;font-weight:400;letter-spacing:0px;">10</div>
<div class="t" style="left:-1444.30px;width:1500px;text-align:right;top:373.44px;font-size:18.5px;color:#666;font-weight:400;letter-spacing:0px;">20</div>
<div class="t" style="left:-1444.30px;width:1500px;text-align:right;top:351.34px;font-size:18.5px;color:#666;font-weight:400;letter-spacing:0px;">30</div>
<div class="t" style="left:-1444.30px;width:1500px;text-align:right;top:329.24px;font-size:18.5px;color:#666;font-weight:400;letter-spacing:0px;">40</div>
<div class="t" style="left:-677.20px;width:1500px;text-align:center;top:443.92px;font-size:19px;color:#666;font-weight:400;letter-spacing:0px;">11:45:00 PM</div>
<div class="t" style="left:-500.64px;width:1500px;text-align:center;top:443.92px;font-size:19px;color:#666;font-weight:400;letter-spacing:0px;">12:45:00 AM</div>
<div class="t" style="left:-324.08px;width:1500px;text-align:center;top:443.92px;font-size:19px;color:#666;font-weight:400;letter-spacing:0px;">1:45:00 AM</div>
<div class="t" style="left:-147.52px;width:1500px;text-align:center;top:443.92px;font-size:19px;color:#666;font-weight:400;letter-spacing:0px;">2:45:00 AM</div>
<div class="t" style="left:29.04px;width:1500px;text-align:center;top:443.92px;font-size:19px;color:#666;font-weight:400;letter-spacing:0px;">3:45:00 AM</div>
<div class="t" style="left:205.60px;width:1500px;text-align:center;top:443.92px;font-size:19px;color:#666;font-weight:400;letter-spacing:0px;">4:45:00 AM</div>
<div class="t" style="left:382.16px;width:1500px;text-align:center;top:443.92px;font-size:19px;color:#666;font-weight:400;letter-spacing:0px;">5:45:00 AM</div>
<div class="t" style="left:558.72px;width:1500px;text-align:center;top:443.92px;font-size:19px;color:#666;font-weight:400;letter-spacing:0px;">6:45:00 AM</div>
<div class="t" style="left:735.28px;width:1500px;text-align:center;top:443.92px;font-size:19px;color:#666;font-weight:400;letter-spacing:0px;">7:45:00 AM</div>
<div class="t" style="left:911.84px;width:1500px;text-align:center;top:443.92px;font-size:19px;color:#666;font-weight:400;letter-spacing:0px;">8:45:00 AM</div>
<div class="t" style="left:1088.40px;width:1500px;text-align:center;top:443.92px;font-size:19px;color:#666;font-weight:400;letter-spacing:0px;">9:45:00 AM</div>
<div class="t" style="left:1264.96px;width:1500px;text-align:center;top:443.92px;font-size:19px;color:#666;font-weight:400;letter-spacing:0px;">10:45:00 AM</div>
<div class="t" style="left:1441.52px;width:1500px;text-align:center;top:443.92px;font-size:19px;color:#666;font-weight:400;letter-spacing:0px;">11:45:00 AM</div>
<div class="t" style="left:1618.08px;width:1500px;text-align:center;top:443.92px;font-size:19px;color:#666;font-weight:400;letter-spacing:0px;">12:45:00 PM</div>
<div class="t" style="left:1794.64px;width:1500px;text-align:center;top:443.92px;font-size:19px;color:#666;font-weight:400;letter-spacing:0px;">1:45:00 PM</div>
<div class="t" style="left:1971.20px;width:1500px;text-align:center;top:443.92px;font-size:19px;color:#666;font-weight:400;letter-spacing:0px;">2:45:00 PM</div>
<div style="position:absolute;left:19.00px;top:497.80px;width:15.60px;height:15.80px;background:#F2B45C;border-radius:4px"></div>
<div class="t" style="left:40.80px;top:497.95px;font-size:16.6px;color:#333;font-weight:400;letter-spacing:0px;">DEBUG</div>
<div style="position:absolute;left:123.00px;top:497.80px;width:15.60px;height:15.80px;background:#8C77C8;border-radius:4px"></div>
<div class="t" style="left:145.40px;top:497.95px;font-size:16.6px;color:#333;font-weight:400;letter-spacing:0px;">ERROR</div>
<div style="position:absolute;left:223.40px;top:497.80px;width:15.60px;height:15.80px;background:#91BF55;border-radius:4px"></div>
<div class="t" style="left:246.00px;top:497.95px;font-size:16.6px;color:#333;font-weight:400;letter-spacing:0px;">INFO</div>
<div style="position:absolute;left:310.00px;top:497.80px;width:15.60px;height:15.80px;background:#E0628C;border-radius:4px"></div>
<div class="t" style="left:332.00px;top:497.95px;font-size:16.6px;color:#333;font-weight:400;letter-spacing:0px;">WARNING</div>
<div style="position:absolute;left:14.00px;top:535.00px;width:939.00px;height:363.00px;background:#3977CC;border-radius:6px;box-shadow:0 1px 3px rgba(0,0,0,0.25)"></div>
<div class="t" style="left:29.80px;top:555.99px;font-size:26px;color:#fff;font-weight:700;letter-spacing:-0.6px;">TOTAL Logs:</div>
<div class="t" style="left:-1146.00px;width:1500px;text-align:right;top:555.57px;font-size:26.5px;color:#fff;font-weight:700;letter-spacing:0.2px;">912,772</div>
<div class="t" style="left:29.80px;top:632.74px;font-size:26px;color:#fff;font-weight:700;letter-spacing:-0.6px;">INFO Logs:</div>
<div class="t" style="left:-1146.00px;width:1500px;text-align:right;top:632.32px;font-size:26.5px;color:#fff;font-weight:700;letter-spacing:0.2px;">632,467</div>
<div class="t" style="left:29.80px;top:709.49px;font-size:26px;color:#fff;font-weight:700;letter-spacing:-0.6px;">WARN Logs:</div>
<div class="t" style="left:-1146.00px;width:1500px;text-align:right;top:709.07px;font-size:26.5px;color:#fff;font-weight:700;letter-spacing:0.2px;">650</div>
<div class="t" style="left:29.80px;top:786.24px;font-size:26px;color:#fff;font-weight:700;letter-spacing:-0.6px;">ERROR Logs:</div>
<div class="t" style="left:-1146.00px;width:1500px;text-align:right;top:785.82px;font-size:26.5px;color:#fff;font-weight:700;letter-spacing:0.2px;">4,388</div>
<div class="card" style="left:969px;top:535px;width:940px;height:363px"></div>
<div class="t" style="left:992.70px;top:560.30px;font-size:22.8px;color:#222;font-weight:400;letter-spacing:0px;">Logs by Severity</div>
<svg style="position:absolute;left:1815.50px;top:559.30px;" width="28.00" height="28.00" viewBox="0 0 28 28"><path d="M19.62 20.24 A8.4 8.4 0 1 1 22.40 13.50" fill="none" stroke="#2A6FCF" stroke-width="2.1"/><path d="M18.60 13.90h7.6l-3.8 4.3z" fill="#2A6FCF"/></svg>
<svg style="position:absolute;left:1868.00px;top:561.00px;" width="12.00" height="24.60" viewBox="0 0 12 24.6"><circle cx="6" cy="6.0" r="2.2" fill="#2A6FCF"/><circle cx="6" cy="12.3" r="2.2" fill="#2A6FCF"/><circle cx="6" cy="18.6" r="2.2" fill="#2A6FCF"/></svg>
<svg style="position:absolute;left:1245.00px;top:620.00px;" width="268.00" height="268.00" viewBox="0 0 268 268"><path d="M134.000 5.000 A129 129 0 1 1 24.351 66.044 L78.240 99.442 A65.6 65.6 0 1 0 134.000 68.400 Z" fill="#4F8B44" stroke="#fff" stroke-width="2.2" stroke-linejoin="round"/><path d="M24.351 66.044 A129 129 0 0 1 114.980 6.410 L124.328 69.117 A65.6 65.6 0 0 0 78.240 99.442 Z" fill="#B7A8A4" stroke="#fff" stroke-width="2.2" stroke-linejoin="round"/><path d="M114.980 6.410 A129 129 0 0 1 128.589 5.114 L131.248 68.458 A65.6 65.6 0 0 0 124.328 69.117 Z" fill="#000000" stroke="#fff" stroke-width="2.2" stroke-linejoin="round"/><path d="M128.589 5.114 A129 129 0 0 1 133.302 5.002 L133.645 68.401 A65.6 65.6 0 0 0 131.248 68.458 Z" fill="#E0524F" stroke="#fff" stroke-width="2.2" stroke-linejoin="round"/><path d="M133.302 5.002 A129 129 0 0 1 134.000 5.000 L134.000 68.400 A65.6 65.6 0 0 0 133.645 68.401 Z" fill="#F2A33A" stroke="#fff" stroke-width="2.2" stroke-linejoin="round"/></svg>
<div class="t" style="left:676.18px;width:1500px;text-align:center;top:831.15px;font-size:15.6px;color:rgba(255,255,255,0.92);font-weight:400;letter-spacing:0px;">632,467</div>
<div class="t" style="left:575.68px;width:1500px;text-align:center;top:665.36px;font-size:15.6px;color:rgba(255,255,255,0.92);font-weight:400;letter-spacing:0px;">104,225</div>
<div class="t" style="left:629.00px;width:1500px;text-align:center;top:743.18px;font-size:22px;color:#222;font-weight:400;letter-spacing:0px;">754,461</div>
<div style="position:absolute;left:1780px;top:600px;width:129px;height:230px;overflow:hidden">
<div style="position:absolute;left:13px;top:20.00px;width:16px;height:16px;background:#4F8B44;border-radius:4px"></div><div class="t" style="left:35.4px;top:19.81px;font-size:17px;color:#333">INFO</div><div style="position:absolute;left:13px;top:56.45px;width:16px;height:16px;background:#B7A8A4;border-radius:4px"></div><div class="t" style="left:35.4px;top:56.26px;font-size:17px;color:#333">UNKNOWN</div><div style="position:absolute;left:13px;top:92.90px;width:16px;height:16px;background:#000000;border-radius:4px"></div><div class="t" style="left:35.4px;top:92.71px;font-size:17px;color:#333">DEBUG</div><div style="position:absolute;left:13px;top:129.35px;width:16px;height:16px;background:#E0524F;border-radius:4px"></div><div class="t" style="left:35.4px;top:129.16px;font-size:17px;color:#333">ERROR</div><div style="position:absolute;left:13px;top:165.80px;width:16px;height:16px;background:#F2A33A;border-radius:4px"></div><div class="t" style="left:35.4px;top:165.61px;font-size:17px;color:#333">WARNING</div><div style="position:absolute;left:13px;top:202.25px;width:16px;height:16px;background:#9A8780;border-radius:4px"></div><div class="t" style="left:35.4px;top:202.06px;font-size:17px;color:#333">TRACE</div>
</div>
<svg style="position:absolute;left:1756.00px;top:841.50px;" width="34.00" height="34.00" viewBox="0 0 34 34"><circle cx="17" cy="17" r="15.1" fill="none" stroke="#4A90E8" stroke-width="1.2"/><circle cx="13.4" cy="12.8" r="2.1" fill="none" stroke="#7FB2F0" stroke-width="1.1"/><circle cx="20" cy="20.3" r="2.1" fill="none" stroke="#7FB2F0" stroke-width="1.1"/><path d="M19.5 11.2L13.6 23" stroke="#7FB2F0" stroke-width="1.1"/></svg>
<div class="card" style="left:1923px;top:535px;width:939px;height:363px"></div>
<div class="t" style="left:1946.00px;top:560.30px;font-size:22.8px;color:#222;font-weight:400;letter-spacing:0px;">Logs by RDA Host</div>
<svg style="position:absolute;left:2769.00px;top:559.30px;" width="28.00" height="28.00" viewBox="0 0 28 28"><path d="M19.62 20.24 A8.4 8.4 0 1 1 22.40 13.50" fill="none" stroke="#2A6FCF" stroke-width="2.1"/><path d="M18.60 13.90h7.6l-3.8 4.3z" fill="#2A6FCF"/></svg>
<svg style="position:absolute;left:2821.00px;top:561.00px;" width="12.00" height="24.60" viewBox="0 0 12 24.6"><circle cx="6" cy="6.0" r="2.2" fill="#2A6FCF"/><circle cx="6" cy="12.3" r="2.2" fill="#2A6FCF"/><circle cx="6" cy="18.6" r="2.2" fill="#2A6FCF"/></svg>
<svg style="position:absolute;left:2135.40px;top:620.00px;" width="268.00" height="268.00" viewBox="0 0 268 268"><path d="M134.000 5.000 A129 129 0 0 1 212.309 236.512 L173.822 186.130 A65.6 65.6 0 0 0 134.000 68.400 Z" fill="#76B3EE" stroke="#fff" stroke-width="2.2" stroke-linejoin="round"/><path d="M212.309 236.512 A129 129 0 0 1 13.868 181.002 L72.909 157.902 A65.6 65.6 0 0 0 173.822 186.130 Z" fill="#F4B862" stroke="#fff" stroke-width="2.2" stroke-linejoin="round"/><path d="M13.868 181.002 A129 129 0 0 1 106.874 7.884 L120.205 69.867 A65.6 65.6 0 0 0 72.909 157.902 Z" fill="#8D78C8" stroke="#fff" stroke-width="2.2" stroke-linejoin="round"/><path d="M106.874 7.884 A129 129 0 0 1 122.142 5.546 L127.970 68.678 A65.6 65.6 0 0 0 120.205 69.867 Z" fill="#96C05C" stroke="#fff" stroke-width="2.2" stroke-linejoin="round"/><path d="M122.142 5.546 A129 129 0 0 1 130.940 5.036 L132.444 68.418 A65.6 65.6 0 0 0 127.970 68.678 Z" fill="#E06A95" stroke="#fff" stroke-width="2.2" stroke-linejoin="round"/><path d="M130.940 5.036 A129 129 0 0 1 134.000 5.000 L134.000 68.400 A65.6 65.6 0 0 0 132.444 68.418 Z" fill="#FFFFFF" stroke="#fff" stroke-width="2.2" stroke-linejoin="round"/></svg>
<div class="t" style="left:1611.29px;width:1500px;text-align:center;top:715.31px;font-size:15.6px;color:rgba(70,70,70,0.78);font-weight:400;letter-spacing:0px;">313,295</div>
<div class="t" style="left:1493.27px;width:1500px;text-align:center;top:839.81px;font-size:15.6px;color:rgba(70,70,70,0.78);font-weight:400;letter-spacing:0px;">232,863</div>
<div class="t" style="left:1433.95px;width:1500px;text-align:center;top:700.49px;font-size:15.6px;color:rgba(70,70,70,0.78);font-weight:400;letter-spacing:0px;">217,972</div>
<div class="t" style="left:1504.72px;width:1500px;text-align:center;top:650.51px;font-size:15.6px;color:rgba(70,70,70,0.78);font-weight:400;letter-spacing:0px;">15,079</div>
<div class="t" style="left:1519.40px;width:1500px;text-align:center;top:743.18px;font-size:22px;color:#222;font-weight:400;letter-spacing:0px;">790,795</div>
<div style="position:absolute;left:2621.00px;top:620.00px;width:16.00px;height:16.00px;background:#76B3EE;border-radius:4px"></div>
<div class="t" style="left:2643.00px;top:619.81px;font-size:17px;color:#333;font-weight:400;letter-spacing:0px;">rdaf-app-vm01</div>
<div style="position:absolute;left:2621.00px;top:656.45px;width:16.00px;height:16.00px;background:#F4B862;border-radius:4px"></div>
<div class="t" style="left:2643.00px;top:656.26px;font-size:17px;color:#333;font-weight:400;letter-spacing:0px;">rda-platform-vm01</div>
<div style="position:absolute;left:2621.00px;top:692.90px;width:16.00px;height:16.00px;background:#8D78C8;border-radius:4px"></div>
<div class="t" style="left:2643.00px;top:692.71px;font-size:17px;color:#333;font-weight:400;letter-spacing:0px;">rdaf-data-vm01</div>
<div style="position:absolute;left:2621.00px;top:729.35px;width:16.00px;height:16.00px;background:#96C05C;border-radius:4px"></div>
<div class="t" style="left:2643.00px;top:729.16px;font-size:17px;color:#333;font-weight:400;letter-spacing:0px;">rdaf-worker-vm01</div>
<div style="position:absolute;left:2621.00px;top:765.80px;width:16.00px;height:16.00px;background:#E06A95;border-radius:4px"></div>
<div class="t" style="left:2643.00px;top:765.61px;font-size:17px;color:#333;font-weight:400;letter-spacing:0px;">rdaf-data-vm02</div>
<div style="position:absolute;left:2621.00px;top:802.25px;width:16.00px;height:16.00px;background:#9E8880;border-radius:4px"></div>
<div class="t" style="left:2643.00px;top:802.06px;font-size:17px;color:#333;font-weight:400;letter-spacing:0px;">rda-data-vm03</div>
<svg style="position:absolute;left:2583.00px;top:841.00px;" width="34.00" height="34.00" viewBox="0 0 34 34"><circle cx="17" cy="17" r="15.1" fill="none" stroke="#4A90E8" stroke-width="1.2"/><circle cx="13.4" cy="12.8" r="2.1" fill="none" stroke="#7FB2F0" stroke-width="1.1"/><circle cx="20" cy="20.3" r="2.1" fill="none" stroke="#7FB2F0" stroke-width="1.1"/><path d="M19.5 11.2L13.6 23" stroke="#7FB2F0" stroke-width="1.1"/></svg>
<div class="card" style="left:14px;top:914px;width:939px;height:362.5px"></div>
<div class="t" style="left:37.50px;top:940.30px;font-size:22.8px;color:#222;font-weight:400;letter-spacing:0px;">Logs by RDA Host IP</div>
<svg style="position:absolute;left:860.00px;top:938.30px;" width="28.00" height="28.00" viewBox="0 0 28 28"><path d="M19.62 20.24 A8.4 8.4 0 1 1 22.40 13.50" fill="none" stroke="#2A6FCF" stroke-width="2.1"/><path d="M18.60 13.90h7.6l-3.8 4.3z" fill="#2A6FCF"/></svg>
<svg style="position:absolute;left:912.70px;top:940.00px;" width="12.00" height="24.60" viewBox="0 0 12 24.6"><circle cx="6" cy="6.0" r="2.2" fill="#2A6FCF"/><circle cx="6" cy="12.3" r="2.2" fill="#2A6FCF"/><circle cx="6" cy="18.6" r="2.2" fill="#2A6FCF"/></svg>
<svg style="position:absolute;left:252.50px;top:999.00px;" width="268.00" height="268.00" viewBox="0 0 268 268"><path d="M134.000 5.000 A129 129 0 0 1 219.688 230.429 L177.575 183.037 A65.6 65.6 0 0 0 134.000 68.400 Z" fill="#76B3EE" stroke="#fff" stroke-width="2.2" stroke-linejoin="round"/><path d="M219.688 230.429 A129 129 0 0 1 34.866 216.544 L83.588 175.976 A65.6 65.6 0 0 0 177.575 183.037 Z" fill="#F4B862" stroke="#fff" stroke-width="2.2" stroke-linejoin="round"/><path d="M34.866 216.544 A129 129 0 0 1 50.884 35.345 L91.733 83.831 A65.6 65.6 0 0 0 83.588 175.976 Z" fill="#8D78C8" stroke="#fff" stroke-width="2.2" stroke-linejoin="round"/><path d="M50.884 35.345 A129 129 0 0 1 85.615 14.418 L109.395 73.189 A65.6 65.6 0 0 0 91.733 83.831 Z" fill="#96C05C" stroke="#fff" stroke-width="2.2" stroke-linejoin="round"/><path d="M85.615 14.418 A129 129 0 0 1 121.146 5.642 L127.463 68.727 A65.6 65.6 0 0 0 109.395 73.189 Z" fill="#E06A95" stroke="#fff" stroke-width="2.2" stroke-linejoin="round"/><path d="M121.146 5.642 A129 129 0 0 1 134.000 5.000 L134.000 68.400 A65.6 65.6 0 0 0 127.463 68.727 Z" fill="#9E8880" stroke="#fff" stroke-width="2.2" stroke-linejoin="round"/></svg>
<div class="t" style="left:-272.83px;width:1500px;text-align:center;top:1090.93px;font-size:15.6px;color:rgba(70,70,70,0.78);font-weight:400;letter-spacing:0px;">350,848</div>
<div class="t" style="left:-370.77px;width:1500px;text-align:center;top:1222.12px;font-size:15.6px;color:rgba(70,70,70,0.78);font-weight:400;letter-spacing:0px;">232,863</div>
<div class="t" style="left:-460.12px;width:1500px;text-align:center;top:1116.85px;font-size:15.6px;color:rgba(70,70,70,0.78);font-weight:400;letter-spacing:0px;">227,353</div>
<div class="t" style="left:-413.56px;width:1500px;text-align:center;top:1042.31px;font-size:15.6px;color:rgba(70,70,70,0.78);font-weight:400;letter-spacing:0px;">45,854</div>
<div class="t" style="left:-363.50px;width:1500px;text-align:center;top:1122.18px;font-size:22px;color:#222;font-weight:400;letter-spacing:0px;">912,772</div>
<div style="position:absolute;left:762.00px;top:999.30px;width:16.00px;height:16.00px;background:#76B3EE;border-radius:4px"></div>
<div class="t" style="left:785.30px;top:999.11px;font-size:17px;color:#333;font-weight:400;letter-spacing:0px;">10.95.125.146</div>
<div style="position:absolute;left:762.00px;top:1035.75px;width:16.00px;height:16.00px;background:#F4B862;border-radius:4px"></div>
<div class="t" style="left:785.30px;top:1035.56px;font-size:17px;color:#333;font-weight:400;letter-spacing:0px;">10.95.125.141</div>
<div style="position:absolute;left:762.00px;top:1072.20px;width:16.00px;height:16.00px;background:#8D78C8;border-radius:4px"></div>
<div class="t" style="left:785.30px;top:1072.01px;font-size:17px;color:#333;font-weight:400;letter-spacing:0px;">10.95.125.143</div>
<div style="position:absolute;left:762.00px;top:1108.65px;width:16.00px;height:16.00px;background:#96C05C;border-radius:4px"></div>
<div class="t" style="left:785.30px;top:1108.46px;font-size:17px;color:#333;font-weight:400;letter-spacing:0px;">10.95.125.144</div>
<div style="position:absolute;left:762.00px;top:1145.10px;width:16.00px;height:16.00px;background:#E06A95;border-radius:4px"></div>
<div class="t" style="left:785.30px;top:1144.91px;font-size:17px;color:#333;font-weight:400;letter-spacing:0px;">10.95.125.145</div>
<div style="position:absolute;left:762.00px;top:1181.55px;width:16.00px;height:16.00px;background:#9E8880;border-radius:4px"></div>
<div class="t" style="left:785.30px;top:1181.36px;font-size:17px;color:#333;font-weight:400;letter-spacing:0px;">10.95.125.149</div>
<svg style="position:absolute;left:724.70px;top:1220.30px;" width="34.00" height="34.00" viewBox="0 0 34 34"><circle cx="17" cy="17" r="15.1" fill="none" stroke="#4A90E8" stroke-width="1.2"/><circle cx="13.4" cy="12.8" r="2.1" fill="none" stroke="#7FB2F0" stroke-width="1.1"/><circle cx="20" cy="20.3" r="2.1" fill="none" stroke="#7FB2F0" stroke-width="1.1"/><path d="M19.5 11.2L13.6 23" stroke="#7FB2F0" stroke-width="1.1"/></svg>
<div class="card" style="left:969px;top:914px;width:940px;height:362.5px"></div>
<div class="t" style="left:992.70px;top:940.30px;font-size:22.8px;color:#222;font-weight:400;letter-spacing:0px;">Logs by Service Category</div>
<svg style="position:absolute;left:1815.50px;top:938.30px;" width="28.00" height="28.00" viewBox="0 0 28 28"><path d="M19.62 20.24 A8.4 8.4 0 1 1 22.40 13.50" fill="none" stroke="#2A6FCF" stroke-width="2.1"/><path d="M18.60 13.90h7.6l-3.8 4.3z" fill="#2A6FCF"/></svg>
<svg style="position:absolute;left:1868.00px;top:940.00px;" width="12.00" height="24.60" viewBox="0 0 12 24.6"><circle cx="6" cy="6.0" r="2.2" fill="#2A6FCF"/><circle cx="6" cy="12.3" r="2.2" fill="#2A6FCF"/><circle cx="6" cy="18.6" r="2.2" fill="#2A6FCF"/></svg>
<svg style="position:absolute;left:1200.60px;top:999.30px;" width="268.00" height="268.00" viewBox="0 0 268 268"><path d="M134.000 5.000 A129 129 0 0 1 217.640 232.210 L176.533 183.943 A65.6 65.6 0 0 0 134.000 68.400 Z" fill="#76B3EE" stroke="#fff" stroke-width="2.2" stroke-linejoin="round"/><path d="M217.640 232.210 A129 129 0 0 1 5.024 136.511 L68.412 135.277 A65.6 65.6 0 0 0 176.533 183.943 Z" fill="#F4B862" stroke="#fff" stroke-width="2.2" stroke-linejoin="round"/><path d="M5.024 136.511 A129 129 0 0 1 134.000 5.000 L134.000 68.400 A65.6 65.6 0 0 0 68.412 135.277 Z" fill="#8D78C8" stroke="#fff" stroke-width="2.2" stroke-linejoin="round"/></svg>
<div class="t" style="left:675.63px;width:1500px;text-align:center;top:1092.19px;font-size:15.6px;color:rgba(70,70,70,0.78);font-weight:400;letter-spacing:0px;">353,904</div>
<div class="t" style="left:544.79px;width:1500px;text-align:center;top:1214.15px;font-size:15.6px;color:rgba(70,70,70,0.78);font-weight:400;letter-spacing:0px;">327,847</div>
<div class="t" style="left:515.35px;width:1500px;text-align:center;top:1057.78px;font-size:15.6px;color:rgba(70,70,70,0.78);font-weight:400;letter-spacing:0px;">231,021</div>
<div class="t" style="left:584.60px;width:1500px;text-align:center;top:1122.48px;font-size:22px;color:#222;font-weight:400;letter-spacing:0px;">912,772</div>
<div style="position:absolute;left:1704.70px;top:999.30px;width:16.00px;height:16.00px;background:#76B3EE;border-radius:4px"></div>
<div class="t" style="left:1727.00px;top:999.11px;font-size:17px;color:#333;font-weight:400;letter-spacing:0px;">rda_infra_svcs</div>
<div style="position:absolute;left:1704.70px;top:1035.75px;width:16.00px;height:16.00px;background:#F4B862;border-radius:4px"></div>
<div class="t" style="left:1727.00px;top:1035.56px;font-size:17px;color:#333;font-weight:400;letter-spacing:0px;">rda_app_svcs</div>
<div style="position:absolute;left:1704.70px;top:1072.20px;width:16.00px;height:16.00px;background:#8D78C8;border-radius:4px"></div>
<div class="t" style="left:1727.00px;top:1072.01px;font-size:17px;color:#333;font-weight:400;letter-spacing:0px;">rda_pfm_svcs</div>
<svg style="position:absolute;left:1667.00px;top:1220.00px;" width="34.00" height="34.00" viewBox="0 0 34 34"><circle cx="17" cy="17" r="15.1" fill="none" stroke="#4A90E8" stroke-width="1.2"/><circle cx="13.4" cy="12.8" r="2.1" fill="none" stroke="#7FB2F0" stroke-width="1.1"/><circle cx="20" cy="20.3" r="2.1" fill="none" stroke="#7FB2F0" stroke-width="1.1"/><path d="M19.5 11.2L13.6 23" stroke="#7FB2F0" stroke-width="1.1"/></svg>
<div class="card" style="left:1923px;top:914px;width:939px;height:362.5px"></div>
<div class="t" style="left:1946.00px;top:940.30px;font-size:22.8px;color:#222;font-weight:400;letter-spacing:0px;">Logs by Service Name</div>
<svg style="position:absolute;left:2769.00px;top:938.30px;" width="28.00" height="28.00" viewBox="0 0 28 28"><path d="M19.62 20.24 A8.4 8.4 0 1 1 22.40 13.50" fill="none" stroke="#2A6FCF" stroke-width="2.1"/><path d="M18.60 13.90h7.6l-3.8 4.3z" fill="#2A6FCF"/></svg>
<svg style="position:absolute;left:2821.00px;top:940.00px;" width="12.00" height="24.60" viewBox="0 0 12 24.6"><circle cx="6" cy="6.0" r="2.2" fill="#2A6FCF"/><circle cx="6" cy="12.3" r="2.2" fill="#2A6FCF"/><circle cx="6" cy="18.6" r="2.2" fill="#2A6FCF"/></svg>
<svg style="position:absolute;left:2116.80px;top:999.00px;" width="268.00" height="268.00" viewBox="0 0 268 268"><path d="M134.000 5.000 A129 129 0 0 1 261.954 117.609 L199.068 125.665 A65.6 65.6 0 0 0 134.000 68.400 Z" fill="#D2A2F2" stroke="#fff" stroke-width="2.2" stroke-linejoin="round"/><path d="M261.954 117.609 A129 129 0 0 1 231.652 218.291 L183.659 176.864 A65.6 65.6 0 0 0 199.068 125.665 Z" fill="#EF92A8" stroke="#fff" stroke-width="2.2" stroke-linejoin="round"/><path d="M231.652 218.291 A129 129 0 0 1 159.277 260.499 L146.854 198.328 A65.6 65.6 0 0 0 183.659 176.864 Z" fill="#F4B862" stroke="#fff" stroke-width="2.2" stroke-linejoin="round"/><path d="M159.277 260.499 A129 129 0 0 1 77.450 249.944 L105.243 192.961 A65.6 65.6 0 0 0 146.854 198.328 Z" fill="#EE8A80" stroke="#fff" stroke-width="2.2" stroke-linejoin="round"/><path d="M77.450 249.944 A129 129 0 0 1 22.395 198.695 L77.246 166.899 A65.6 65.6 0 0 0 105.243 192.961 Z" fill="#D878B2" stroke="#fff" stroke-width="2.2" stroke-linejoin="round"/><path d="M22.395 198.695 A129 129 0 0 1 6.519 153.735 L69.172 144.036 A65.6 65.6 0 0 0 77.246 166.899 Z" fill="#8D78C8" stroke="#fff" stroke-width="2.2" stroke-linejoin="round"/><path d="M6.519 153.735 A129 129 0 0 1 7.243 110.049 L69.541 121.820 A65.6 65.6 0 0 0 69.172 144.036 Z" fill="#D86E92" stroke="#fff" stroke-width="2.2" stroke-linejoin="round"/><path d="M7.243 110.049 A129 129 0 0 1 13.012 89.245 L72.474 111.241 A65.6 65.6 0 0 0 69.541 121.820 Z" fill="#D8904E" stroke="#fff" stroke-width="2.2" stroke-linejoin="round"/><path d="M13.012 89.245 A129 129 0 0 1 21.283 71.263 L76.681 102.096 A65.6 65.6 0 0 0 72.474 111.241 Z" fill="#96C05C" stroke="#fff" stroke-width="2.2" stroke-linejoin="round"/><path d="M21.283 71.263 A129 129 0 0 1 31.932 55.113 L82.096 93.884 A65.6 65.6 0 0 0 76.681 102.096 Z" fill="#C9A545" stroke="#fff" stroke-width="2.2" stroke-linejoin="round"/><path d="M31.932 55.113 A129 129 0 0 1 44.066 41.519 L88.266 86.971 A65.6 65.6 0 0 0 82.096 93.884 Z" fill="#E08058" stroke="#fff" stroke-width="2.2" stroke-linejoin="round"/><path d="M44.066 41.519 A129 129 0 0 1 54.049 32.764 L93.342 82.519 A65.6 65.6 0 0 0 88.266 86.971 Z" fill="#E0698F" stroke="#fff" stroke-width="2.2" stroke-linejoin="round"/><path d="M54.049 32.764 A129 129 0 0 1 63.553 25.934 L98.176 79.046 A65.6 65.6 0 0 0 93.342 82.519 Z" fill="#C87A7E" stroke="#fff" stroke-width="2.2" stroke-linejoin="round"/><path d="M63.553 25.934 A129 129 0 0 1 73.637 19.994 L103.304 76.025 A65.6 65.6 0 0 0 98.176 79.046 Z" fill="#B08078" stroke="#fff" stroke-width="2.2" stroke-linejoin="round"/><path d="M73.637 19.994 A129 129 0 0 1 80.710 16.522 L106.900 74.259 A65.6 65.6 0 0 0 103.304 76.025 Z" fill="#9E8880" stroke="#fff" stroke-width="2.2" stroke-linejoin="round"/><path d="M80.710 16.522 A129 129 0 0 1 84.149 15.022 L108.649 73.496 A65.6 65.6 0 0 0 106.900 74.259 Z" fill="#B09080" stroke="#fff" stroke-width="2.2" stroke-linejoin="round"/><path d="M84.149 15.022 A129 129 0 0 1 87.630 13.622 L110.420 72.785 A65.6 65.6 0 0 0 108.649 73.496 Z" fill="#D09080" stroke="#fff" stroke-width="2.2" stroke-linejoin="round"/><path d="M87.630 13.622 A129 129 0 0 1 91.151 12.324 L112.210 72.125 A65.6 65.6 0 0 0 110.420 72.785 Z" fill="#E8A890" stroke="#fff" stroke-width="2.2" stroke-linejoin="round"/><path d="M91.151 12.324 A129 129 0 0 1 94.708 11.130 L114.019 71.517 A65.6 65.6 0 0 0 112.210 72.125 Z" fill="#D8C890" stroke="#fff" stroke-width="2.2" stroke-linejoin="round"/><path d="M94.708 11.130 A129 129 0 0 1 98.299 10.039 L115.845 70.962 A65.6 65.6 0 0 0 114.019 71.517 Z" fill="#B8D8A0" stroke="#fff" stroke-width="2.2" stroke-linejoin="round"/><path d="M98.299 10.039 A129 129 0 0 1 101.919 9.053 L117.686 70.461 A65.6 65.6 0 0 0 115.845 70.962 Z" fill="#A0D0C0" stroke="#fff" stroke-width="2.2" stroke-linejoin="round"/><path d="M101.919 9.053 A129 129 0 0 1 105.567 8.173 L119.541 70.013 A65.6 65.6 0 0 0 117.686 70.461 Z" fill="#98D0E8" stroke="#fff" stroke-width="2.2" stroke-linejoin="round"/><path d="M105.567 8.173 A129 129 0 0 1 109.238 7.399 L121.408 69.620 A65.6 65.6 0 0 0 119.541 70.013 Z" fill="#A0D8D0" stroke="#fff" stroke-width="2.2" stroke-linejoin="round"/><path d="M109.238 7.399 A129 129 0 0 1 112.931 6.732 L123.286 69.281 A65.6 65.6 0 0 0 121.408 69.620 Z" fill="#B8E0B0" stroke="#fff" stroke-width="2.2" stroke-linejoin="round"/><path d="M112.931 6.732 A129 129 0 0 1 116.641 6.173 L125.173 68.997 A65.6 65.6 0 0 0 123.286 69.281 Z" fill="#E0E0A0" stroke="#fff" stroke-width="2.2" stroke-linejoin="round"/><path d="M116.641 6.173 A129 129 0 0 1 120.367 5.722 L127.067 68.767 A65.6 65.6 0 0 0 125.173 68.997 Z" fill="#B8E0B8" stroke="#fff" stroke-width="2.2" stroke-linejoin="round"/><path d="M120.367 5.722 A129 129 0 0 1 124.103 5.380 L128.967 68.593 A65.6 65.6 0 0 0 127.067 68.767 Z" fill="#A8D8E0" stroke="#fff" stroke-width="2.2" stroke-linejoin="round"/><path d="M124.103 5.380 A129 129 0 0 1 127.698 5.154 L130.795 68.478 A65.6 65.6 0 0 0 128.967 68.593 Z" fill="#FFFFFF" stroke="#fff" stroke-width="2.2" stroke-linejoin="round"/><path d="M127.698 5.154 A129 129 0 0 1 134.000 5.000 L134.000 68.400 A65.6 65.6 0 0 0 130.795 68.478 Z" fill="#FFFFFF" stroke="#fff" stroke-width="2.2" stroke-linejoin="round"/></svg>
<div class="t" style="left:1564.88px;width:1500px;text-align:center;top:1052.58px;font-size:15.6px;color:rgba(70,70,70,0.78);font-weight:400;letter-spacing:0px;">209,710</div>
<div class="t" style="left:1593.68px;width:1500px;text-align:center;top:1153.35px;font-size:15.6px;color:rgba(70,70,70,0.78);font-weight:400;letter-spacing:0px;">121,995</div>
<div class="t" style="left:1549.67px;width:1500px;text-align:center;top:1209.19px;font-size:15.6px;color:rgba(70,70,70,0.78);font-weight:400;letter-spacing:0px;">96,081</div>
<div class="t" style="left:1488.39px;width:1500px;text-align:center;top:1221.60px;font-size:15.6px;color:rgba(70,70,70,0.78);font-weight:400;letter-spacing:0px;">94,704</div>
<div class="t" style="left:1409.34px;width:1500px;text-align:center;top:1157.69px;font-size:15.6px;color:rgba(70,70,70,0.78);font-weight:400;letter-spacing:0px;">54,111</div>
<div class="t" style="left:1403.81px;width:1500px;text-align:center;top:1123.79px;font-size:15.6px;color:rgba(70,70,70,0.78);font-weight:400;letter-spacing:0px;">49,425</div>
<div class="t" style="left:1412.67px;width:1500px;text-align:center;top:1084.86px;font-size:15.6px;color:rgba(70,70,70,0.78);font-weight:400;letter-spacing:0px;">24,178</div>
<div class="t" style="left:1436.84px;width:1500px;text-align:center;top:1052.47px;font-size:15.6px;color:rgba(70,70,70,0.78);font-weight:400;letter-spacing:0px;">14,849</div>
<div class="t" style="left:1494.71px;width:1500px;text-align:center;top:1028.59px;font-size:15.6px;color:rgba(70,70,70,0.78);font-weight:400;letter-spacing:0px;">3,440</div>
<div class="t" style="left:1500.80px;width:1500px;text-align:center;top:1122.18px;font-size:22px;color:#222;font-weight:400;letter-spacing:0px;">912,889</div>
<div style="position:absolute;left:2583.00px;top:999.30px;width:16.00px;height:16.00px;background:#D2A2F2;border-radius:4px"></div>
<div class="t" style="left:2605.00px;top:999.11px;font-size:17px;color:#333;font-weight:400;letter-spacing:0px;">rda_haproxy</div>
<div style="position:absolute;left:2583.00px;top:1035.75px;width:16.00px;height:16.00px;background:#EF92A8;border-radius:4px"></div>
<div class="t" style="left:2605.00px;top:1035.56px;font-size:17px;color:#333;font-weight:400;letter-spacing:0px;">rda_minio</div>
<div style="position:absolute;left:2583.00px;top:1072.20px;width:16.00px;height:16.00px;background:#F4B862;border-radius:4px"></div>
<div class="t" style="left:2605.00px;top:1072.01px;font-size:17px;color:#333;font-weight:400;letter-spacing:0px;">rda_current_alerts_caas</div>
<div style="position:absolute;left:2583.00px;top:1108.65px;width:16.00px;height:16.00px;background:#EE8A80;border-radius:4px"></div>
<div class="t" style="left:2605.00px;top:1108.46px;font-size:17px;color:#333;font-weight:400;letter-spacing:0px;">rda_all_alerts_caas</div>
<div style="position:absolute;left:2583.00px;top:1145.10px;width:16.00px;height:16.00px;background:#D878B2;border-radius:4px"></div>
<div class="t" style="left:2605.00px;top:1144.91px;font-size:17px;color:#333;font-weight:400;letter-spacing:0px;">rda_collector</div>
<div style="position:absolute;left:2583.00px;top:1181.55px;width:16.00px;height:16.00px;background:#8D78C8;border-radius:4px"></div>
<div class="t" style="left:2605.00px;top:1181.36px;font-size:17px;color:#333;font-weight:400;letter-spacing:0px;">rda_ingestion_tracker</div>
<div style="position:absolute;left:2583.00px;top:1218.00px;width:16.00px;height:16.00px;background:#D86E92;border-radius:4px"></div>
<div class="t" style="left:2605.00px;top:1217.81px;font-size:17px;color:#333;font-weight:400;letter-spacing:0px;">rda_registry</div>
<div style="position:absolute;left:2583.00px;top:1254.45px;width:16.00px;height:16.00px;background:#D8904E;border-radius:4px"></div>
<div class="t" style="left:2605.00px;top:1254.26px;font-size:17px;color:#333;font-weight:400;letter-spacing:0px;">rda_scheduler</div>
<svg style="position:absolute;left:2545.00px;top:1220.00px;" width="34.00" height="34.00" viewBox="0 0 34 34"><circle cx="17" cy="17" r="15.1" fill="none" stroke="#4A90E8" stroke-width="1.2"/><circle cx="13.4" cy="12.8" r="2.1" fill="none" stroke="#7FB2F0" stroke-width="1.1"/><circle cx="20" cy="20.3" r="2.1" fill="none" stroke="#7FB2F0" stroke-width="1.1"/><path d="M19.5 11.2L13.6 23" stroke="#7FB2F0" stroke-width="1.1"/></svg>
</body></html>
